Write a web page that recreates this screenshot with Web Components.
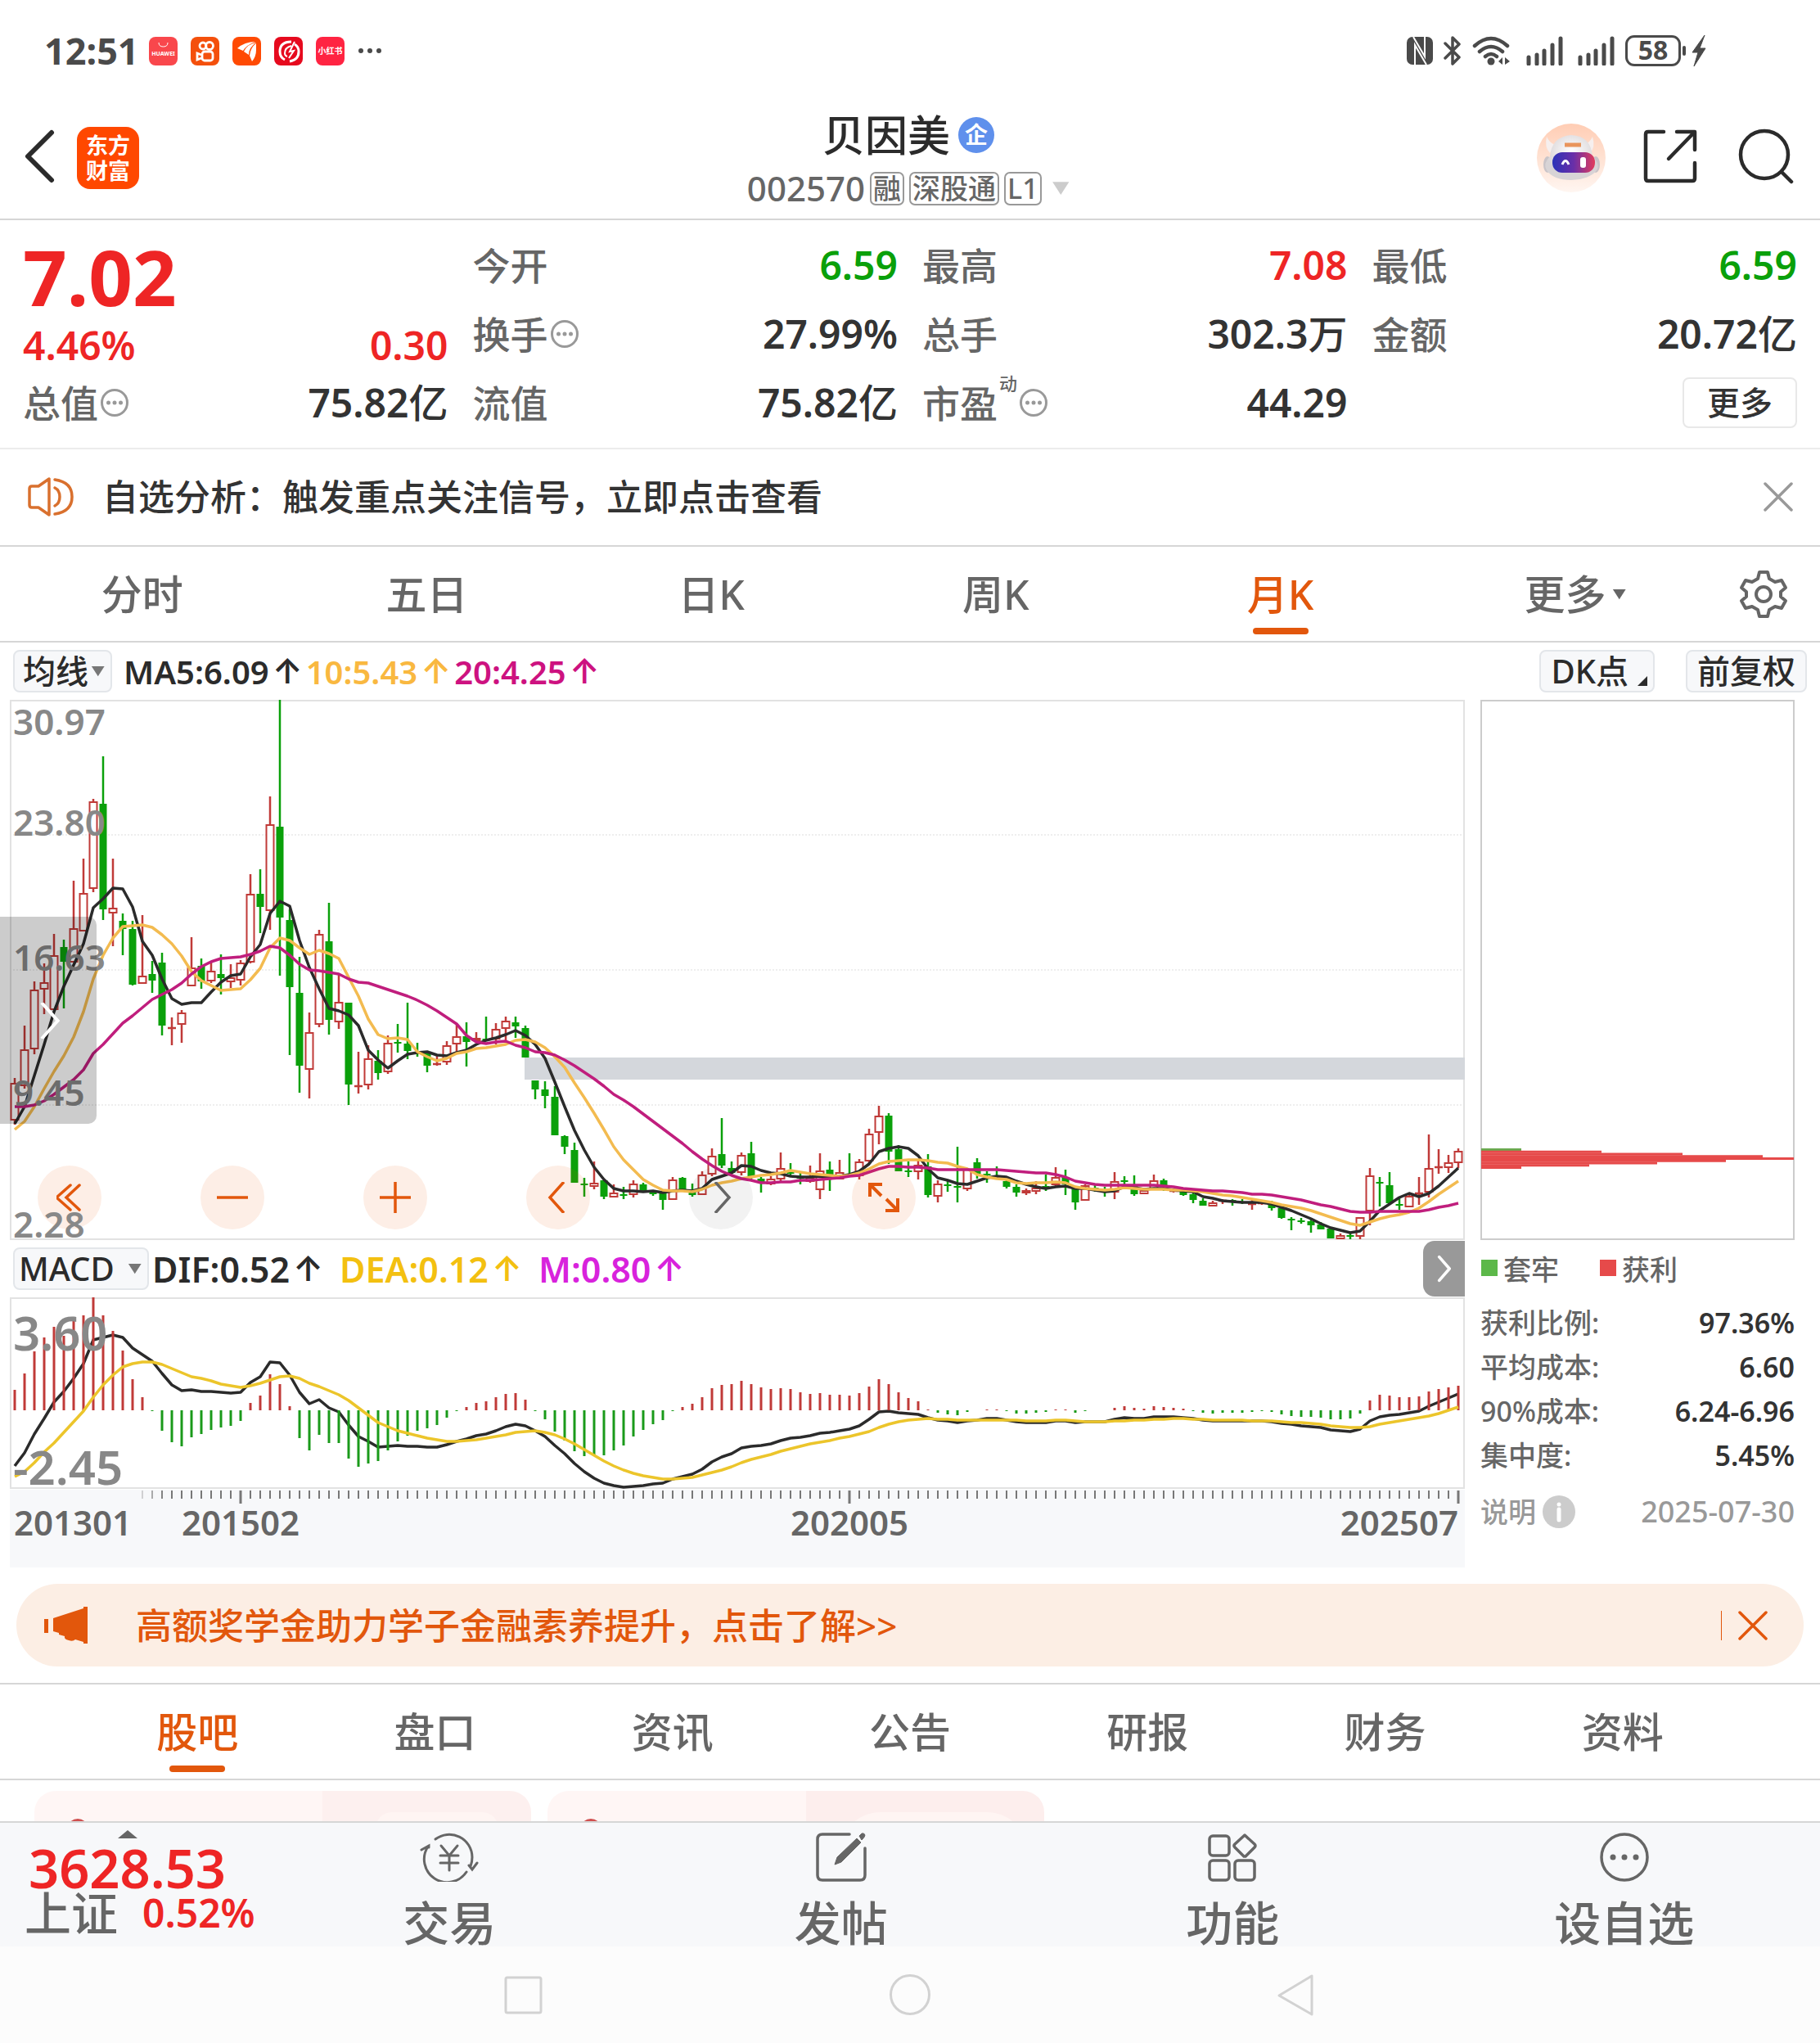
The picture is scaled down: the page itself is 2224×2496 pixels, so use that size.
<!DOCTYPE html>
<html lang="zh-CN">
<head>
<meta charset="utf-8">
<meta name="viewport" content="width=device-width, initial-scale=1">
<title>贝因美 002570</title>
<style>
  html { background: #fff; }
  body {
    margin: 0;
    min-height: 100vh;
    display: flex;
    flex-direction: column;
    font-family: "Noto Sans", "Noto Sans CJK SC", sans-serif;
    font-weight: 500;
    color: #333;
    --up: #ee2525;
    --down: #0aa00a;
    --accent: #e2570c;
    --muted: #666;
    --line: #d6d6d6;
  }
  .chart-area {
    display: grid;
    grid-template-columns: minmax(0, 1778fr) minmax(0, 384fr);
    column-gap: 19px;
    padding: 0 31px 0 12px;
  }
</style>
</head>
<body>
  <status-bar></status-bar>

  <stock-header code="002570">
    贝因美
    <stock-tag slot="tags">融</stock-tag>
    <stock-tag slot="tags">深股通</stock-tag>
    <stock-tag slot="tags">L1</stock-tag>
  </stock-header>

  <quote-panel>
    <quote-item label="今开" tone="down">6.59</quote-item>
    <quote-item label="最高" tone="up">7.08</quote-item>
    <quote-item label="最低" tone="down">6.59</quote-item>
    <quote-item label="换手" hint>27.99%</quote-item>
    <quote-item label="总手" unit="万">302.3</quote-item>
    <quote-item label="金额" unit="亿">20.72</quote-item>
    <quote-item label="流值" unit="亿">75.82</quote-item>
    <quote-item label="市盈" sup="动" hint>44.29</quote-item>
  </quote-panel>

  <notice-bar>自选分析：触发重点关注信号，立即点击查看</notice-bar>

  <tab-bar>
    <tab-item>分时</tab-item>
    <tab-item>五日</tab-item>
    <tab-item>日K</tab-item>
    <tab-item>周K</tab-item>
    <tab-item active>月K</tab-item>
    <tab-item more>更多</tab-item>
    <ui-icon slot="end" name="gear" size="60"></ui-icon>
  </tab-bar>

  <chart-toolbar></chart-toolbar>

  <div class="chart-area">
    <div>
      <kline-chart></kline-chart>
      <macd-header></macd-header>
      <macd-chart></macd-chart>
      <time-axis></time-axis>
    </div>
    <chip-panel></chip-panel>
  </div>

  <promo-banner>高额奖学金助力学子金融素养提升，点击了解&gt;&gt;</promo-banner>

  <tab-bar inset>
    <tab-item active>股吧</tab-item>
    <tab-item>盘口</tab-item>
    <tab-item>资讯</tab-item>
    <tab-item>公告</tab-item>
    <tab-item>研报</tab-item>
    <tab-item>财务</tab-item>
    <tab-item>资料</tab-item>
  </tab-bar>

  <feed-cards></feed-cards>

  <bottom-bar>
    <nav-item icon="trade">交易</nav-item>
    <nav-item icon="post">发帖</nav-item>
    <nav-item icon="apps">功能</nav-item>
    <nav-item icon="dots">设自选</nav-item>
  </bottom-bar>

  <system-nav></system-nav>

<script>
  // every icon is drawn on its own viewBox, strokes use currentColor
  const ICONS = {
    back: ['0 0 40 66', '<path d="M35 4 6 33 35 62" fill="none" stroke="currentColor" stroke-width="6" stroke-linecap="round" stroke-linejoin="round"/>'],
    share: ['0 0 66 66', '<g fill="none" stroke="currentColor" stroke-width="4.500" stroke-linecap="round" stroke-linejoin="round"><path d="M25 3H6q-3 0-3 3v54q0 3 3 3h54q3 0 3-3V41"/><path d="M41 3h22v22M61 5 31 36"/></g>'],
    search: ['0 0 68 68', '<g fill="none" stroke="currentColor" stroke-width="4.500" stroke-linecap="round"><circle cx="32" cy="32" r="29"/><path d="m53 53 12 12"/></g>'],
    speaker: ['0 0 58 48', '<g fill="none" stroke="currentColor" stroke-width="3.500" stroke-linejoin="round" stroke-linecap="round"><path d="M3 14q0-3 3-3h8L27 2v44L14 37H6q-3 0-3-3z"/><path d="M34 13q6 3 6 11t-6 11M34 3q21 3 21 21T34 45"/></g>'],
    close: ['0 0 36 36', '<path d="m2 2 32 32M34 2 2 34" fill="none" stroke="currentColor" stroke-width="3.500" stroke-linecap="round"/>'],
    gear: ['0 0 60 60', '<g fill="none" stroke="currentColor" stroke-width="4" stroke-linejoin="round"><path d="M25 3h10l2 8 7 4 8-2 5 9-6 5v6l6 5-5 9-8-2-7 4-2 8H25l-2-8-7-4-8 2-5-9 6-5v-6l-6-5 5-9 8 2 7-4z"/><circle cx="30" cy="30" r="9"/></g>'],
    hint: ['0 0 36 36', '<circle cx="18" cy="18" r="15.500" fill="none" stroke="currentColor" stroke-width="3"/><g fill="currentColor"><circle cx="10.500" cy="18" r="2.500"/><circle cx="18" cy="18" r="2.500"/><circle cx="25.500" cy="18" r="2.500"/></g>'],
    caret: ['0 0 20 16', '<path d="M1 1h18L10 15z" fill="currentColor"/>'],
    corner: ['0 0 14 14', '<path d="M13 1v12H1z" fill="currentColor"/>'],
    horn: ['0 0 54 46', '<path d="M0 15h5v17H0zM11 14 48 2V0h5v45h-5v-2l-10-3q-3 3-8 1-6-1-5-5l-7-2v-2l-7-2z" fill="currentColor"/>'],
    first: ['3 0 32 34', '<path d="M20 2 3 17l17 15M31 2 15 17l16 15" fill="none" stroke="currentColor" stroke-width="3.500" stroke-linecap="round"/>'],
    minus: ['0 0 38 38', '<path d="M0 19h38" stroke="currentColor" stroke-width="3.500"/>'],
    plus: ['0 0 38 38', '<path d="M0 19h38M19 0v38" stroke="currentColor" stroke-width="3.500"/>'],
    left: ['0 0 38 38', '<path d="M26 0 9 19l17 19" fill="none" stroke="currentColor" stroke-width="3.500"/>'],
    right: ['0 0 38 38', '<path d="m12 0 17 19-17 19" fill="none" stroke="currentColor" stroke-width="3.500"/>'],
    next: ['0 0 20 38', '<path d="m3 3 14 16L3 35" fill="none" stroke="currentColor" stroke-width="4" stroke-linecap="round" stroke-linejoin="round"/>'],
    expand: ['0 0 38 38', '<path d="M2 18V3h15M3 4l13 13M36 20v15H21M35 34 22 21" fill="none" stroke="currentColor" stroke-width="4"/>'],
    trade: ['0 0 72 60', '<g fill="none" stroke="currentColor" stroke-width="3" stroke-linecap="round"><path d="M19 8A28 28 0 0 1 64 30q0 6-2 11"/><path d="M57 48A28 28 0 0 1 10 17M2 21l9-5 0 2M70 37l-6 8-4-5"/><path d="m26 16 10 12 10-12M36 28v18M25 28h22M25 37h22"/></g>'],
    post: ['0 0 64 60', '<g fill="none" stroke="currentColor" stroke-width="3.500" stroke-linecap="round"><path d="M42 2H9Q3 2 3 8v44q0 6 6 6h46q6 0 6-6V19"/></g><path d="m24 39 3-9 24-23 5 5-24 24zM54 4l3-3q3-1 4 2 0 2-4 6z" fill="currentColor" stroke="currentColor" stroke-width="1"/>'],
    apps: ['0 0 62 60', '<g fill="none" stroke="currentColor" stroke-width="3.500"><rect x="3" y="4" width="24" height="24" rx="4"/><rect x="3" y="34" width="24" height="24" rx="4"/><rect x="34" y="34" width="24" height="24" rx="4"/><path d="m46 3 12 11q2 2 0 4L47 29h-2L34 18q-2-2 0-4z" stroke-linejoin="round"/></g>'],
    dots: ['0 0 64 60', '<circle cx="32" cy="30" r="28" fill="none" stroke="currentColor" stroke-width="3.500"/><g fill="currentColor"><circle cx="18" cy="30" r="3.500"/><circle cx="32" cy="30" r="3.500"/><circle cx="46" cy="30" r="3.500"/></g>'],
    nfc: ['0 0 32 34', '<rect width="32" height="34" rx="7" fill="currentColor"/><path d="M10 34V10l14 24M22 0v24L8 0" fill="none" stroke="#fff" stroke-width="2"/>'],
    bluetooth: ['0 0 22 36', '<path d="m2 9 17 17-8 8V2l8 8L2 27" fill="none" stroke="currentColor" stroke-width="3.500" stroke-linejoin="round" stroke-linecap="round"/>'],
    wifi: ['0 0 48 36', '<g fill="none" stroke="currentColor" stroke-width="4.500" stroke-linecap="round"><path d="M3 12q20-18 40 0M9 19q14-12 28 0M16 25q7-6 14 0"/></g><circle cx="23" cy="31" r="4.500" fill="currentColor"/><path d="M37 26v9l-5-4zM40 26v9l6-4z" fill="currentColor"/>'],
    signal: ['0 0 50 36', '<path d="M8 34v-8M18 34V23M27 34V18M37 34V11M47 34V3" stroke="currentColor" stroke-width="5" stroke-linecap="round"/>'],
    bolt: ['0 0 18 38', '<path d="M16 0 1 21h7L3 38l14-22h-7z" fill="currentColor" stroke="currentColor"/>'],
    ellipsis: ['0 0 30 8', '<g fill="currentColor"><circle cx="4" cy="4" r="3"/><circle cx="15" cy="4" r="3"/><circle cx="26" cy="4" r="3"/></g>'],
    info: ['0 0 40 40', '<circle cx="20" cy="20" r="20" fill="#ccc"/><path d="M20 17v13" stroke="#fff" stroke-width="5" stroke-linecap="round"/><circle cx="20" cy="11" r="2.500" fill="#fff"/>'],
    triangle: ['0 0 24 10', '<path d="M0 10 12 0l12 10z" fill="currentColor"/>'],
  };

  const BUTTON = `
    button, select {
      font: inherit; color: inherit; margin: 0; padding: 0;
      border: 0; background: none; appearance: none; cursor: pointer;
    }
    a { color: inherit; text-decoration: none; }
  `;

  const icon = (name, size) => `<ui-icon name="${name}" size="${size}"></ui-icon>`;

  // small helper: registers an element whose shadow root comes from a render function
  function define(name, render) {
    customElements.define(name, class extends HTMLElement {
      connectedCallback() {
        if (this.shadowRoot) return;
        this.attachShadow({ mode: 'open' }).innerHTML = render(this);
      }
    });
  }

  // size is the height, the width follows the viewBox
  define('ui-icon', el => {
    const [box, shape] = ICONS[el.getAttribute('name')];
    return `<style>
      :host { display: inline-block; flex: none; height: ${el.getAttribute('size')}px; }
      svg { display: block; height: 100%; }
    </style><svg viewBox="${box}" aria-hidden="true">${shape}</svg>`;
  });

  define('status-bar', () => `<style>
      :host {
        display: flex; align-items: center; justify-content: space-between;
        height: 124px; padding: 0 139px 2px 54px; color: #4a4a4a;
      }
      .group { display: flex; align-items: center; gap: 13px; }
      .apps { gap: 16px; }
      .apps svg { width: 35px; height: 35px; }
      time { margin-right: -4px; font-size: 45px; font-weight: 700; line-height: 60px; }
      .battery {
        position: relative; box-sizing: border-box; width: 68px; height: 38px;
        border: 3px solid #4a4a4a; border-radius: 11px;
        font-size: 32px; font-weight: 700; line-height: 30px; text-align: center;
      }
      .battery::after {
        content: ""; position: absolute; right: -9px; top: 10px;
        width: 4px; height: 12px; border-radius: 2px; background: #4a4a4a;
      }
    </style>
    <div class="group apps">
      <time>12:51</time>
      <svg viewBox="0 0 35 35"><rect width="35" height="35" rx="8" fill="#f9474c"/><path d="M12 7q0 5 5.500 5T23 7" fill="none" stroke="#fff"/><text x="17.500" y="23" font-size="7" font-weight="700" text-anchor="middle" fill="#fff">HUAWEI</text></svg>
      <svg viewBox="0 0 35 35"><rect width="35" height="35" rx="8" fill="#f4500c"/><g fill="none" stroke="#fff" stroke-width="2.800"><circle cx="15" cy="11" r="4"/><circle cx="23" cy="11" r="4.500"/><rect x="14" y="18" width="13" height="11" rx="3"/><path d="m13 22-5-2v8l5-2"/></g></svg>
      <svg viewBox="0 0 35 35"><rect width="35" height="35" rx="8" fill="#ff4a03"/><path d="M6 14q9-8 22-8-11 4-15 11zM14 18Q18 9 29 7q-9 6-9 15zM21 23q1-10 8-15v8q0 8-5 14z" fill="#fff"/></svg>
      <svg viewBox="0 0 35 35"><rect width="35" height="35" rx="8" fill="#e60a1e"/><g fill="none" stroke="#fff" stroke-width="3"><path d="M21 6Q7 6 7 18q0 7 6 10M25 9q5 3 5 9 0 10-11 12"/><path d="M21 11q-8 2-8 9 0 3 3 4M25 6l-6 12 5-1-6 9" stroke-width="2"/></g></svg>
      <svg viewBox="0 0 35 35"><rect width="35" height="35" rx="8" fill="#ff2442"/><text x="17.500" y="21" font-size="10" font-weight="700" text-anchor="middle" fill="#fff">小红书</text></svg>
      ${icon('ellipsis', 8)}
    </div>
    <div class="group">
      ${icon('nfc', 34)}${icon('bluetooth', 36)}${icon('wifi', 36)}
      ${icon('signal', 36)}${icon('signal', 36)}
      <span class="battery">58</span>${icon('bolt', 38)}
    </div>`);

  define('stock-tag', () => `<style>
      :host {
        display: block; box-sizing: border-box; height: 41px; padding: 0 2px;
        border: 2px solid #999; border-radius: 7px;
        font-size: 34px; line-height: 36px; color: #666;
      }
    </style><slot></slot>`);

  define('stock-header', el => `<style>${BUTTON}
      :host {
        display: grid; grid-template-columns: 1fr auto 1fr; align-items: center;
        padding: 9px 32px 16px 28px; border-bottom: 2px solid var(--line); color: #2b2b2b;
      }
      button { display: block; }
      .side { display: flex; align-items: center; gap: 26px; }
      .right { justify-content: flex-end; gap: 50px; }
      .logo {
        box-sizing: border-box; width: 76px; height: 76px; padding: 7px 0;
        border-radius: 16px; background: #ff4800; color: #fff;
        font-size: 27px; font-weight: 700; line-height: 31px; text-align: center;
      }
      .logo span { display: block; }
      h1 {
        display: flex; align-items: center; justify-content: center; gap: 10px;
        margin: 0 0 14px; font-size: 52px; font-weight: 500; line-height: 60px;
      }
      .corp {
        width: 44px; height: 44px; border-radius: 50%; background: #5f90ec; color: #fff;
        font-size: 28px; font-weight: 700; line-height: 42px; text-align: center;
      }
      .sub { display: flex; align-items: center; justify-content: center; gap: 6px; font-size: 42px; line-height: 42px; color: #666; }
      .sub ui-icon { margin-left: 6px; color: #ccc; }
      .robot { width: 84px; height: 84px; display: block; margin-right: -4px; }
    </style>
    <div class="side">
      <button aria-label="返回">${icon('back', 66)}</button>
      <a class="logo" href="#home"><span>东方</span><span>财富</span></a>
    </div>
    <div>
      <h1><slot></slot><span class="corp">企</span></h1>
      <div class="sub">${el.getAttribute('code')}<slot name="tags"></slot>${icon('caret', 18)}</div>
    </div>
    <div class="side right">
      <button aria-label="助手">
        <svg class="robot" viewBox="0 0 84 84">
          <defs>
            <linearGradient id="bg" x2="0" y2="1"><stop stop-color="#ffcdb4"/><stop offset="1" stop-color="#fff6f1"/></linearGradient>
            <linearGradient id="face"><stop stop-color="#2b33b8"/><stop offset=".5" stop-color="#6a2fa8"/><stop offset="1" stop-color="#e23c5c"/></linearGradient>
            <radialGradient id="head" cy=".35"><stop stop-color="#fff"/><stop offset="1" stop-color="#d8d4d6"/></radialGradient>
          </defs>
          <circle cx="42" cy="42" r="42" fill="url(#bg)"/>
          <path d="M12 16q-3 13 4 20l6-10q-7-3-10-10zM68 16q4 13-3 20l-8-9q8-4 11-11z" fill="#f6efee"/>
          <ellipse cx="13" cy="50" rx="5" ry="10" fill="#c9c4c8"/><ellipse cx="72" cy="50" rx="5" ry="10" fill="#c9c4c8"/>
          <path d="M42 14q24 1 26 26 10 10 5 17-8 11-31 12-22 0-30-12-5-8 4-17 2-24 26-26z" fill="url(#head)"/>
          <path d="M34 26h20" stroke="#e9955c" stroke-width="5"/>
          <rect x="19" y="35" width="52" height="25" rx="12" fill="url(#face)"/>
          <path d="M31 50q4-9 8 0" fill="none" stroke="#fff" stroke-width="3"/><rect x="53" y="41" width="7" height="13" rx="3" fill="#fff"/>
        </svg>
      </button>
      <button aria-label="分享">${icon('share', 66)}</button>
      <button aria-label="搜索">${icon('search', 68)}</button>
    </div>`);

  define('quote-item', el => {
    const tone = el.getAttribute('tone');
    const sup = el.getAttribute('sup');
    return `<style>
      :host {
        display: flex; align-items: center; justify-content: space-between;
        height: 84px; font-size: 48px; font-weight: 600; line-height: 60px;
        color: ${tone ? `var(--${tone})` : 'inherit'};
      }
      .label { display: flex; align-items: center; gap: 2px; font-size: 46px; font-weight: 500; color: var(--muted); }
      .unit { font-weight: 500; }
      sup { align-self: flex-start; margin-top: -14px; font-size: 22px; line-height: 40px; }
      ui-icon { color: #999; }
    </style>
    <span class="label">${el.getAttribute('label')}${sup ? `<sup>${sup}</sup>` : ''}${el.hasAttribute('hint') ? icon('hint', 36) : ''}</span>
    <span><slot></slot><span class="unit">${el.getAttribute('unit') || ''}</span></span>`;
  });

  define('quote-panel', () => `<style>${BUTTON}
      :host {
        display: grid; grid-template-columns: repeat(4, minmax(0, 1fr)); column-gap: 30px;
        padding: 13px 28px; border-bottom: 2px solid #ececec;
      }
      .lead { grid-row: 1 / 4; }
      .price { font-size: 94px; font-weight: 700; line-height: 112px; color: var(--up); }
      .change { display: flex; justify-content: space-between; font-size: 48px; font-weight: 600; line-height: 56px; color: var(--up); }
      .items { grid-column: 2 / 5; display: grid; grid-template-columns: subgrid; }
      .more {
        justify-self: end; align-self: center; box-sizing: border-box; width: 140px; height: 62px;
        border: 2px solid #e8e8e8; border-radius: 8px; font-size: 40px; line-height: 56px;
      }
    </style>
    <div class="lead">
      <div class="price">7.02</div>
      <div class="change"><span>4.46%</span><span>0.30</span></div>
      <quote-item label="总值" unit="亿" hint>75.82</quote-item>
    </div>
    <div class="items"><slot></slot><button class="more">更多</button></div>`);

  define('notice-bar', () => `<style>${BUTTON}
      :host {
        display: flex; align-items: center; padding: 28px 33px 29px; gap: 34px;
        border-bottom: 2px solid var(--line); font-size: 44px; line-height: 60px; color: #333;
      }
      .icon { color: #d9702e; display: flex; }
      a { flex: 1; }
      button { display: flex; color: #999; }
    </style>
    <span class="icon">${icon('speaker', 48)}</span>
    <a href="#signal"><slot></slot></a>
    <button aria-label="关闭">${icon('close', 36)}</button>`);

  define('tab-bar', el => `<style>${BUTTON}
      :host {
        display: flex; align-items: stretch; color: var(--muted);
        border-bottom: 2px solid var(--line);
        ${el.hasAttribute('inset') ? 'border-top: 2px solid var(--line); padding: 0 96px;' : ''}
      }
      .tabs { flex: 1; display: flex; }
      .end { width: 138px; display: flex; align-items: center; justify-content: center; }
    </style>
    <div class="tabs" role="tablist"><slot></slot></div>
    ${el.hasAttribute('inset') ? '' : '<button class="end" aria-label="设置"><slot name="end"></slot></button>'}`);

  // the caret of a "more" tab hangs outside the centred label
  define('tab-item', el => `<style>${BUTTON}
      :host { flex: 1; display: block; }
      button {
        position: relative; width: 100%; height: 115px;
        display: flex; align-items: center; justify-content: center; gap: 8px;
        font-size: 50px; line-height: 60px;
      }
      ui-icon { margin-right: -26px; }
      [aria-selected=true] { color: var(--accent); }
      [aria-selected=true]::after {
        content: ""; position: absolute; bottom: 8px; width: 68px; height: 8px;
        border-radius: 4px; background: var(--accent);
      }
    </style>
    <button role="tab" aria-selected="${el.hasAttribute('active')}"><slot></slot>${el.hasAttribute('more') ? icon('caret', 14) : ''}</button>`);

  // drop-down with a drawn caret over its right padding
  define('pick-list', el => `<style>${BUTTON}
      :host { display: inline-grid; align-items: center; }
      select, ui-icon { grid-area: 1 / 1; }
      select {
        box-sizing: border-box; height: 52px; padding: 0 var(--pad-end, 27px) 0 var(--pad-start, 10px);
        border: 2px solid #e3e6ea; border-radius: 8px; background: #f7f8fa;
        color: #2b2b2b; font-size: 40px; font-weight: 500; line-height: 46px;
      }
      ui-icon { justify-self: end; margin-right: 9px; color: #777; pointer-events: none; }
    </style>
    <select aria-label="${el.getAttribute('label')}"><option>${el.getAttribute('value')}</option></select>
    ${icon('caret', 14)}`);

  define('trend-value', el => `<style>
      :host { display: inline-flex; align-items: center; color: ${el.getAttribute('color')}; }
      i { font: 600 42px/50px Inter, "Noto Sans CJK SC", sans-serif; margin-left: 4px; }
    </style><slot></slot><i>↑</i>`);

  define('chart-toolbar', () => `<style>${BUTTON}
      :host { display: flex; align-items: center; height: 70px; padding: 0 16px; gap: 14px; font-size: 40px; font-weight: 600; color: #2b2b2b; }
      .right { margin-left: auto; display: flex; gap: 38px; }
      trend-value + trend-value { margin-left: -10px; }
      button {
        display: flex; align-items: center; gap: 10px; box-sizing: border-box; height: 52px; font-weight: 500;
        padding: 0 12px; border: 2px solid #e3e6ea; border-radius: 8px; background: #f7f8fa; line-height: 48px;
      }
      button ui-icon { align-self: flex-end; margin: 0 -6px 5px 0; }
    </style>
    <pick-list label="均线" value="均线"></pick-list>
    <trend-value color="#2b2b2b">MA5:6.09</trend-value>
    <trend-value color="#f9b840">10:5.43</trend-value>
    <trend-value color="#cd1280">20:4.25</trend-value>
    <div class="right">
      <button>DK点${icon('corner', 14)}</button>
      <button>前复权</button>
    </div>`);

  define('macd-header', () => `<style>${BUTTON}
      :host { display: flex; align-items: center; height: 70px; padding-left: 4px; gap: 20px; font-size: 43px; font-weight: 600; }
      pick-list { margin-right: -16px; --pad-start: 5px; --pad-end: 40px; }
      button {
        margin-left: auto; align-self: stretch; width: 51px; margin-block: 1px; display: flex; align-items: center; justify-content: center;
        border-radius: 14px 0 0 14px; background: #999; color: #fff;
      }
    </style>
    <pick-list label="指标" value="MACD"></pick-list>
    <trend-value color="#2b2b2b">DIF:0.52</trend-value>
    <trend-value color="#f3c010">DEA:0.12</trend-value>
    <trend-value color="#d822dc">M:0.80</trend-value>
    <button aria-label="展开">${icon('next', 34)}</button>`);

  // candles: high, body top, body bottom, low, in chart units from the top; r = rise, g = fall
  const CANDLES = `
    462 468 514 519 r,398 427 472 475 r,344 354 427 433 r,322 345 354 384 r,286 312 379 379 r,293 302 320 377 g,
    221 279 321 321 r,194 236 283 283 r,121 124 231 235 r,69 127 256 269 g,194 254 261 301 r,261 270 280 312 g,
    270 280 348 349 g,263 337 347 347 r,319 335 343 358 g,309 321 398 410 g,388 400 400 422 r,379 382 397 419 r,
    290 327 350 350 r,316 325 344 353 g,321 331 344 346 r,311 335 340 360 g,323 339 345 352 r,318 321 343 349 r,
    213 237 321 322 r,207 237 253 285 g,118 152 258 281 r,0 155 266 337 g,256 269 351 434 g,314 358 447 480 g,
    382 406 452 487 r,281 286 397 400 r,248 295 391 409 g,334 369 394 402 r,370 370 470 495 g,430 471 471 481 r,
    422 438 471 476 r,428 441 456 464 g,410 419 455 457 r,396 418 419 431 g,370 420 429 439 g,419 430 432 436 g,
    429 432 447 455 g,435 444 447 447 r,417 422 443 446 r,397 411 421 430 r,394 411 418 448 g,406 413 417 417 r,
    387 414 416 416 g,395 402 415 421 r,387 392 402 417 r,387 394 399 413 g,398 401 437 437 g,465 465 476 488 g,
    466 476 484 499 g,472 485 532 532 g,532 533 546 555 g,541 550 590 590 g,584 591 592 607 g,564 590 595 598 r,
    587 587 607 610 g,592 602 608 608 r,595 604 605 610 g,587 591 605 608 r,590 592 600 602 g,600 602 603 606 g,
    600 602 611 623 g,583 586 611 611 r,583 584 599 599 g,591 600 605 607 g,576 580 605 605 r,548 557 580 582 r,
    511 555 569 572 g,564 572 578 578 g,553 556 578 581 r,540 554 584 586 g,583 585 590 602 g,582 585 592 593 r,
    553 572 586 588 r,566 577 578 582 g,578 583 585 592 g,569 583 589 590 r,554 575 599 610 r,564 574 580 600 g,
    562 577 586 586 r,554 579 580 582 g,561 564 582 586 r,524 530 564 566 r,496 508 529 543 r,505 508 552 567 g,
    544 549 576 576 g,564 575 577 583 g,562 568 577 586 r,555 570 605 608 g,587 591 607 614 r,587 592 593 601 g,
    546 594 596 614 g,572 573 598 600 r,560 565 579 585 g,576 579 581 590 g,570 582 583 585 g,586 588 595 597 g,
    592 595 602 607 g,597 599 603 605 r,588 596 601 604 r,580 594 596 600 g,571 583 593 596 r,574 583 592 605 g,
    597 597 614 623 g,592 593 612 612 r,591 596 597 601 g,595 598 600 607 g,577 588 602 610 r,582 587 589 592 g,
    581 594 604 606 g,597 599 604 604 r,580 587 599 599 r,585 587 594 600 g,597 599 601 602 r,598 599 605 606 g,
    602 604 611 615 g,609 612 618 618 g,612 614 619 619 r,610 611 614 616 r,610 611 614 618 g,610 613 614 616 g,
    611 615 616 623 r,612 614 616 617 r,612 615 621 624 g,620 621 633 634 g,632 634 636 648 g,633 636 638 640 g,
    635 637 642 651 g,638 641 647 647 g,645 646 658 658 g,652 654 659 659 r,652 654 656 659 g,632 632 656 659 r,
    572 581 625 642 r,583 589 590 619 g,577 593 615 617 g,609 616 618 623 g,604 606 620 620 r,583 602 604 617 r,
    531 572 602 608 r,549 570 572 579 r,556 565 572 578 r,548 551 566 572 r`;

  const MA5 = `518 497 459 421 381 350 324 298 254 243 230 231 253 295 312 341 365 372 370 370 357 345 337 335 314
    299 261 246 252 294 327 353 377 380 385 398 428 440 450 441 433 431 430 434 435 431 428 421 416 413 409 404 410
    421 438 467 497 526 550 571 586 597 600 600 601 600 602 600 599 600 597 586 582 578 569 570 575 578 579 582 583
    583 582 583 582 580 576 567 552 548 546 548 557 573 584 587 591 592 588 584 582 583 588 592 595 597 595 594 597
    597 599 601 600 595 596 598 597 597 599 600 601 607 609 612 613 614 614 614 616 620 624 629 634 640 645 648 651
    649 637 624 616 608 603 607 603 594 583 572`;
  const MA10 = `525 515 497 475 454 435 412 381 341 312 291 277 276 275 278 287 298 313 332 343 349 355 354 353 342
    328 303 291 294 303 311 306 310 316 339 362 390 409 414 413 415 430 436 441 438 432 430 426 425 423 421 416 415
    418 425 436 449 468 486 505 525 546 562 574 586 593 599 600 600 601 598 593 590 588 585 583 581 580 578 575 577
    579 580 581 582 581 578 573 567 564 563 562 562 563 565 566 570 573 580 583 585 586 590 591 590 590 589 590 595
    597 598 599 598 596 597 598 598 598 599 599 600 601 603 605 606 608 610 612 614 617 619 621 624 628 632 636 640
    642 638 634 631 629 626 621 613 604 596 588`;
  const MA20 = `497 497 495 490 482 473 464 452 432 421 408 395 386 376 366 360 354 346 335 326 320 316 315 314 311
    307 301 303 312 323 330 331 333 335 341 345 346 350 354 358 362 367 373 380 388 396 410 418 420 418 417 422 425
    430 431 434 440 447 455 463 472 482 489 497 506 515 524 533 542 552 561 569 576 581 585 587 590 590 589 589 587
    587 586 585 584 582 581 577 573 570 570 571 571 572 574 574 574 574 574 574 574 575 576 577 578 578 580 583 588
    590 592 593 593 593 593 593 593 594 595 597 598 599 600 600 601 602 604 604 605 607 609 611 614 617 619 622 625
    626 626 625 625 625 625 625 623 620 618 615`;

  const BARS = `25 45 72 89 102 91 109 116 138 116 97 73 38 16 -1 -25 -39 -44 -33 -29 -24 -21 -19 -13 9 18 44 32 5
    -34 -49 -30 -40 -40 -59 -69 -65 -62 -49 -38 -31 -25 -22 -18 -9 -1 4 9 11 16 20 21 13 -1 -11 -26 -37 -50 -56 -55
    -55 -49 -43 -32 -24 -17 -12 -1 4 8 16 27 31 32 36 32 28 26 27 26 22 20 21 19 19 18 21 29 38 32 22 15 11 1 -3 -5
    -6 -2 0 1 1 -1 -4 -4 -3 -2 1 1 -3 -1 0 0 3 5 3 2 5 4 3 2 -1 -3 -4 -3 -3 -3 -2 -1 -2 -5 -7 -8 -8 -9 -11 -11 -10
    -4 12 19 18 16 16 17 23 26 28 30`;
  const DIF = `206 190 167 148 128 115 99 81 52 49 46 49 62 70 78 93 107 114 113 115 115 116 117 116 104 97 79 80 95
    116 130 125 135 140 156 170 176 183 182 181 182 182 183 183 180 176 173 169 167 163 158 155 157 163 170 181 191
    203 213 221 227 230 232 231 230 228 227 222 219 216 210 201 195 191 184 182 181 179 175 172 171 169 166 165 163
    161 157 149 140 139 141 142 143 147 150 151 153 151 150 148 148 150 152 153 153 153 151 151 153 152 152 152 149
    147 148 148 146 146 146 147 148 150 151 151 151 151 151 151 152 154 155 157 158 159 162 163 164 161 151 146 144
    143 141 139 133 128 123 118`;
  const DEA = `219 213 202 189 178 165 152 139 122 107 95 85 81 79 79 82 87 92 97 99 102 106 108 110 108 105 101 97
    96 99 105 109 114 119 126 135 144 153 158 163 166 169 172 174 176 176 175 174 172 170 168 165 164 163 165 168
    173 179 186 193 200 206 211 215 218 220 222 222 221 220 217 214 211 207 202 198 195 192 188 185 182 179 177 175
    172 170 167 164 159 155 152 150 149 148 149 149 150 150 150 150 150 150 150 151 151 151 150 150 151 152 152 152
    151 151 150 150 149 149 148 148 149 149 150 150 150 150 151 151 151 152 153 153 154 155 157 158 159 159 158 155
    153 151 149 147 145 142 138 134`;

  const STEP = 12;
  const px = i => 6 + i * STEP;
  const nums = text => text.trim().split(/\s+/).map(Number);
  const line = (text, color) =>
    `<polyline fill="none" stroke="${color}" stroke-width="3.500" stroke-linejoin="round" points="${nums(text).map((y, i) => `${px(i)},${y}`).join(' ')}"/>`;

  function candle(row, i) {
    const [high, top, bottom, low, kind] = row.trim().split(' ');
    const x = px(i);
    const h = Math.max(bottom - top, 2);
    if (kind === 'g') {
      return `<path d="M${x} ${high}V${low}" stroke="#0aa00a" stroke-width="2.500"/><rect x="${x - 4.5}" y="${top}" width="9" height="${h}" fill="#0aa00a"/>`;
    }
    if (h <= 3) {
      return `<path d="M${x} ${high}V${low}M${x - 5} ${+top + 1}h10" stroke="#c03a38" stroke-width="2.500"/>`;
    }
    return `<path d="M${x} ${high}V${top}M${x} ${bottom}V${low}" stroke="#c03a38" stroke-width="2.500"/><rect x="${x - 4.5}" y="${+top + 1}" width="9" height="${Math.max(h - 2, 1)}" fill="#fff" stroke="#c03a38" stroke-width="2"/>`;
  }

  const CHART_CSS = `
    svg { display: block; width: 100%; overflow: visible; }
    text { font-weight: 600; fill: #888; }
  `;

  define('kline-chart', () => `<style>${BUTTON}${CHART_CSS}
      :host { display: block; position: relative; }
      text { font-size: 44px; }
      .tools { position: absolute; left: 34px; bottom: 13px; display: flex; gap: 121px; }
      .tools button {
        width: 78px; height: 78px; border-radius: 50%; display: grid; place-items: center;
        background: rgba(240, 90, 10, .1); color: var(--accent);
      }
      .tools .off { background: rgba(0, 0, 0, .05); color: #666; }
      /* drawer handle, sticks out over the left page margin */
      .handle {
        position: absolute; left: -12px; top: 265px; width: 118px; height: 253px;
        display: grid; place-items: center; border-radius: 0 10px 10px 0;
        background: rgba(0, 0, 0, .2); color: #fff;
      }
      .scale { position: absolute; inset: 0; pointer-events: none; }
    </style>
    <svg viewBox="0 0 1778 660" role="img" aria-label="月K线">
      <path d="M0 165h1778M0 330h1778M0 495h1778" stroke="#ddd" stroke-width="1" stroke-dasharray="2 2"/>
      <rect x="1" y="1" width="1776" height="658" fill="none" stroke="#e2e2e2" stroke-width="2"/>
      <rect x="629" y="437" width="1149" height="27" fill="#d4d7dc"/>
      ${CANDLES.split(',').map(candle).join('')}
      ${line(MA5, '#2b2b2b')}${line(MA10, '#f3bb50')}${line(MA20, '#c01e7d')}
    </svg>
    <div class="tools">
      <button aria-label="最早">${icon('first', 34)}</button>
      <button aria-label="缩小">${icon('minus', 38)}</button>
      <button aria-label="放大">${icon('plus', 38)}</button>
      <button aria-label="左移">${icon('left', 38)}</button>
      <button class="off" aria-label="右移">${icon('right', 38)}</button>
      <button aria-label="全屏">${icon('expand', 38)}</button>
    </div>
    <svg class="scale" viewBox="0 0 1778 660">
      <text x="4" y="43">30.97</text>
      <text x="4" y="166">23.80</text>
      <text x="4" y="331">16.63</text>
      <text x="4" y="496">9.45</text>
      <text x="4" y="657">2.28</text>
    </svg>
    <button class="handle" aria-label="侧栏">${icon('right', 44)}</button>`);

  define('macd-chart', () => `<style>${CHART_CSS}
      :host { display: block; }
      text { font-size: 58px; }
    </style>
    <svg viewBox="0 0 1778 235" role="img" aria-label="MACD">
      <rect x="1" y="1" width="1776" height="232" fill="none" stroke="#e2e2e2" stroke-width="2"/>
      ${line(DIF, '#2b2b2b')}
      ${nums(BARS).map((v, i) => v ? `<path d="M${px(i)} 138v${-v}" stroke="${v > 0 ? '#c03a38' : '#1a9a1a'}" stroke-width="3"/>` : '').join('')}
      ${line(DEA, '#ecc52b')}
      <text x="4" y="65">3.60</text>
      <text x="4" y="229">-2.45</text>
    </svg>`);

  // ticks under the first year fade out
  define('time-axis', () => {
    let ticks = '';
    for (let i = 13; i < 148; i++) {
      const major = i === 23 || i === 85 || i === 147;
      const fade = Math.min(1, (i - 12) * .3);
      ticks += `<path d="M${px(i)} 1v${major ? 16 : 10}" stroke="#777" stroke-width="${major ? 3 : 2}" opacity="${fade}"/>`;
    }
    return `<style>${CHART_CSS}
      :host { display: block; background: #f7f8fa; }
      text { font-size: 42px; fill: #666; }
    </style>
    <svg viewBox="0 0 1778 95">
      ${ticks}
      <text x="5" y="56">201301</text>
      <text x="${px(23)}" y="56" text-anchor="middle">201502</text>
      <text x="${px(85)}" y="56" text-anchor="middle">202005</text>
      <text x="1770" y="56" text-anchor="end">202507</text>
    </svg>`;
  });

  // chip distribution: widths of the price levels, top one is the trapped part
  define('chip-panel', () => {
    const levels = [49, 147, 246, 344, 382, 299, 215, 132, 49];
    const rows = [['获利比例:', '97.36%'], ['平均成本:', '6.60'], ['90%成本:', '6.24-6.96'], ['集中度:', '5.45%']];
    return `<style>${BUTTON}
      :host { display: block; font-size: 34px; color: #333; }
      svg { display: block; width: 100%; }
      .legend { display: flex; align-items: center; gap: 50px; height: 68px; padding-left: 1px; color: var(--muted); }
      .legend span { display: flex; align-items: center; gap: 7px; }
      .legend span::before { content: ""; width: 20px; height: 20px; background: var(--c); }
      dl { margin: 6px 0 12px; }
      dl div, .foot { display: flex; align-items: center; justify-content: space-between; line-height: 54px; }
      dt { color: var(--muted); }
      dd { margin: 0; font-weight: 600; }
      .foot { height: 60px; color: #999; }
      .foot button { display: flex; align-items: center; gap: 8px; }
      time { font-size: 36px; }
    </style>
    <svg viewBox="0 0 384 660" role="img" aria-label="筹码分布">
      <rect x="1" y="1" width="382" height="658" fill="none" stroke="#ccc" stroke-width="2"/>
      ${levels.map((w, i) => `<rect x="1" y="${548 + i * 2.75}" width="${w}" height="3" fill="${i ? '#e64a4a' : '#6aa84f'}"/>`).join('')}
    </svg>
    <div class="legend"><span style="--c:#5cb849">套牢</span><span style="--c:#e64a4a">获利</span></div>
    <dl>${rows.map(([k, v]) => `<div><dt>${k}</dt><dd>${v}</dd></div>`).join('')}</dl>
    <div class="foot"><button>说明${icon('info', 40)}</button><time>2025-07-30</time></div>`;
  });

  define('promo-banner', () => `<style>${BUTTON}
      :host {
        display: flex; align-items: center; margin: 20px; padding: 0 44px 0 34px; height: 101px;
        border-radius: 51px; background: #fceee4; color: var(--accent);
        font-size: 44px; line-height: 60px;
      }
      a { flex: 1; margin-left: 58px; }
      button { display: flex; padding-left: 20px; border-left: 1px solid var(--accent); }
    </style>
    ${icon('horn', 46)}
    <a href="#promo"><slot></slot></a>
    <button aria-label="关闭">${icon('close', 36)}</button>`);

  define('feed-cards', () => `<style>
      :host { flex: 1 0 49px; height: 0; display: flex; gap: 20px; box-sizing: border-box; padding: 13px 42px 0; overflow: hidden; }
      .card {
        position: relative; flex: none; width: 607px; height: 200px; overflow: hidden; border-radius: 26px;
        background: linear-gradient(90deg, #fff6f5 58%, #fdf0ef 58%);
      }
      .card + .card { background: linear-gradient(90deg, #fff6f5 52%, #fdeeed 52%); }
      .card::before { content: ""; display: block; width: 26px; height: 26px; margin: 34px 0 0 40px; border-radius: 50%; background: #d05050; }
      .card::after { content: ""; position: absolute; top: 26px; right: 40px; width: 150px; height: 100px; border-radius: 20px; background: #fff5f3; }
      .card + .card::after { right: 20px; width: 230px; border-radius: 50px; }
    </style>
    <div class="card"></div><div class="card"></div>`);

  define('nav-item', el => `<style>${BUTTON}
      :host { flex: 1; min-width: 0; }
      a { display: flex; flex-direction: column; align-items: center; gap: 22px; padding-top: 12px; }
      span { font-size: 57px; line-height: 57px; }
    </style>
    <a href="#${el.getAttribute('icon')}">${icon(el.getAttribute('icon'), 60)}<span><slot></slot></span></a>`);

  define('bottom-bar', () => `<style>${BUTTON}
      :host { display: flex; overflow: hidden; border-top: 2px solid var(--line); background: #f7f8fa; color: var(--muted); }
      .index { flex: none; width: 310px; box-sizing: border-box; padding: 9px 0 0 30px; white-space: nowrap; }
      .index ui-icon { display: block; width: 24px; margin-left: 114px; }
      b { display: block; padding-left: 5px; font-size: 65px; font-weight: 600; line-height: 56px; margin-top: 8px; color: var(--up); }
      .row { display: flex; align-items: center; gap: 30px; font-size: 57px; line-height: 54px; }
      .row span { font-size: 48px; font-weight: 600; color: var(--up); }
    </style>
    <a class="index" href="#index">${icon('triangle', 10)}<b>3628.53</b><div class="row">上证<span>0.52%</span></div></a>
    <slot></slot>`);

  define('system-nav', () => `<style>${BUTTON}
      :host { display: flex; justify-content: center; align-items: center; height: 118px; background: #fcfcfc; gap: 412px; }
      button { display: flex; width: 60px; justify-content: center; margin-bottom: 1px; }
      svg { width: 52px; height: 52px; fill: none; stroke: #d2d2d2; stroke-width: 3; stroke-linejoin: round; }
    </style>
    <button aria-label="最近任务"><svg viewBox="0 0 52 52"><rect x="4" y="5" width="43" height="43" rx="2"/></svg></button>
    <button aria-label="主页"><svg viewBox="0 0 52 52"><circle cx="26" cy="26" r="23.500"/></svg></button>
    <button aria-label="返回"><svg viewBox="0 0 52 52"><path d="M45 3v47L5 27z"/></svg></button>`);
</script>
</body>
</html>
